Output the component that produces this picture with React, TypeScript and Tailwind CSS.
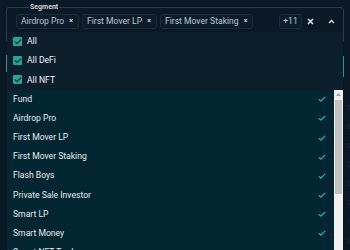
import { Check } from 'lucide-react';

const chips = ['Airdrop Pro', 'First Mover LP', 'First Mover Staking'];
const groups = ['All', 'All DeFi', 'All NFT'];
const segments = [
  'Fund',
  'Airdrop Pro',
  'First Mover LP',
  'First Mover Staking',
  'Flash Boys',
  'Private Sale Investor',
  'Smart LP',
  'Smart Money',
  'Smart NFT Trader',
];

function TickIcon() {
  return (
    <svg width="8" height="6" viewBox="0 0 8 6" className="shrink-0">
      <polyline points="0.8,3.2 2.9,5 7.2,0.9" fill="none" stroke="#17b09b" strokeWidth="1.3" />
    </svg>
  );
}

export default function App() {
  return (
    <div className="relative w-[350px] h-[250px] overflow-hidden bg-[#0b1826] font-['Roboto','Liberation_Sans',sans-serif]">
      {/* things behind the popup */}
      <div className="absolute left-[6px] top-[55px] w-[1px] h-[17px] bg-[#19a496]" />
      <div className="absolute left-[343px] top-[56px] w-[1px] h-[21px] bg-[#19a496]" />
      <div className="absolute left-[346px] top-[98px] flex flex-col text-[8px] leading-[19px] text-[#1c2c3a]">
        <span>3</span>
        <span>3</span>
        <span>2</span>
        <span>2</span>
        <span>2</span>
        <span>2</span>
        <span>1</span>
        <span>3</span>
      </div>

      {/* input */}
      <div className="px-[6px] pt-[3px]">
        <fieldset className="h-[40px] border border-[#2a3b4a] rounded-[3px] pl-[9px] pr-[8px]">
          <legend className="ml-[13px] px-[1px] text-[7px] leading-[9px] font-bold text-[#cfd6dd]">Segment</legend>
          <div className="flex items-center h-[15px] mt-[2px]">
            <div className="flex gap-[3px]">
              {chips.map((c) => (
                <div
                  key={c}
                  className="h-[15px] pl-[4px] pr-[5px] flex items-center gap-[5px] border border-[#1b2b3a] bg-[#0d1c2a] rounded-[3px] text-[8.6px] text-[#bcc6cf]"
                >
                  <span>{c}</span>
                  <span className="text-[7px] font-bold text-[#cfd6dd]">×</span>
                </div>
              ))}
            </div>
            <div className="flex-1" />
            <div className="h-[15px] w-[23px] flex items-center justify-center border border-[#1b2b3a] bg-[#0d1c2a] rounded-[3px] text-[8.6px] text-[#bcc6cf]">
              +11
            </div>
            <svg width="7" height="7" viewBox="0 0 7 7" className="ml-[5px]">
              <path d="M1 1L6 6M6 1L1 6" stroke="#e2e7ec" strokeWidth="1.5" />
            </svg>
            <svg width="7" height="5" viewBox="0 0 7 5" className="ml-[14px]">
              <polyline points="1,4 3.5,1.5 6,4" fill="none" stroke="#e2e7ec" strokeWidth="1.4" />
            </svg>
          </div>
        </fieldset>
      </div>

      {/* popup */}
      <div className="absolute top-[32px] left-[7px] right-[7px] bottom-0 flex flex-col overflow-hidden shadow-lg">
        <div className="bg-[#0c1d2c]">
          {groups.map((g) => (
            <div key={g} className="h-[19.2px] flex items-center pl-[6px] gap-[5px]">
              <div className="w-[9px] h-[9px] rounded-[1px] bg-[#1aa89a] flex items-center justify-center">
                <Check className="w-[8px] h-[8px] text-[#0c1d2c]" strokeWidth={3.5} />
              </div>
              <span className="text-[8.6px] text-[#f2f4f6]">{g}</span>
            </div>
          ))}
        </div>
        <div className="flex-1 flex bg-[#022631] min-h-0">
          <div className="flex-1 flex flex-col">
            {segments.map((s) => (
              <div key={s} className="h-[19.2px] shrink-0 flex items-center justify-between pl-[6px] pr-[8px]">
                <span className="text-[8.6px] text-[#e6ebef]">{s}</span>
                <TickIcon />
              </div>
            ))}
          </div>
          <div className="w-[9px] bg-[#f1f1f1] flex flex-col">
            <div className="h-[10px] flex items-center justify-center">
              <svg width="5" height="3" viewBox="0 0 5 3">
                <polygon points="0,3 2.5,0 5,3" fill="#a3a3a3" />
              </svg>
            </div>
            <div className="mx-[1px] h-[94px] bg-[#c1c1c1]" />
          </div>
        </div>
      </div>
    </div>
  );
}
